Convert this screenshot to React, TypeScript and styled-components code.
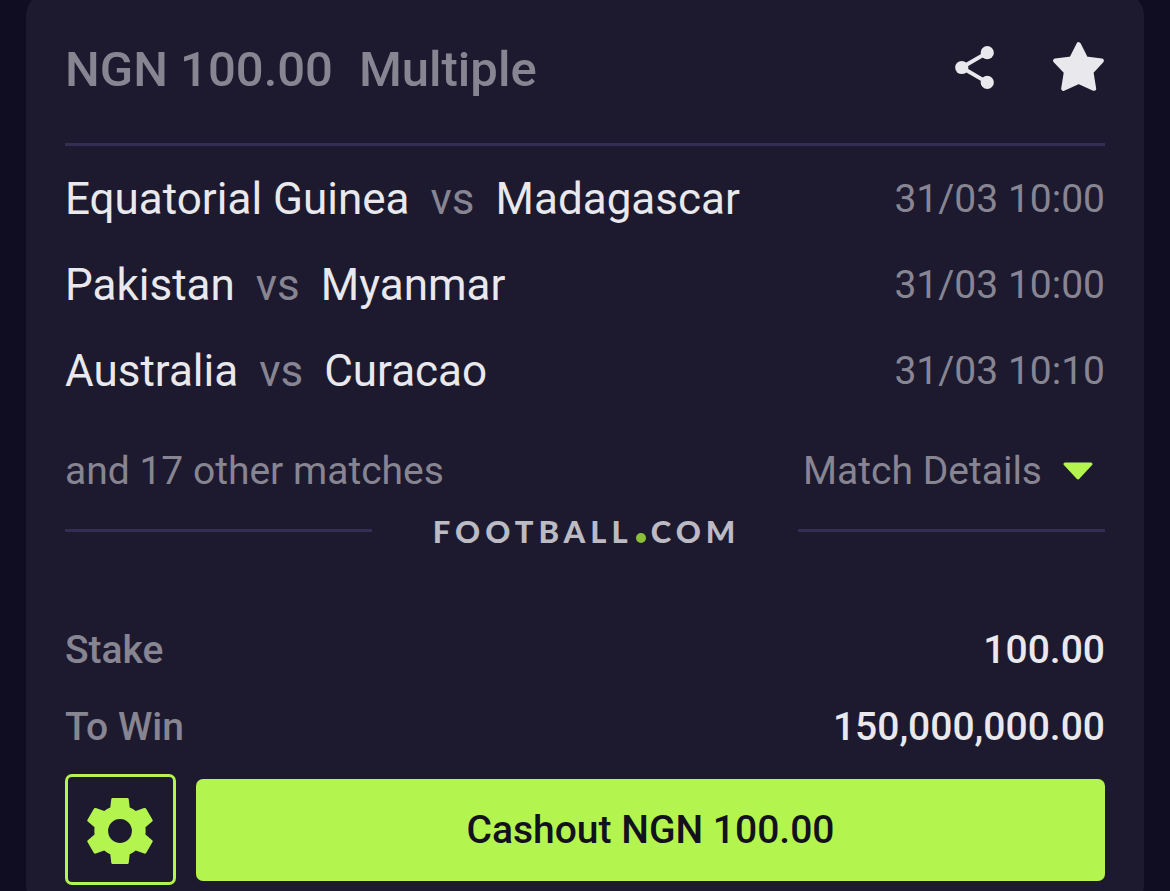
import React, { useState } from "react";
import styled, { createGlobalStyle } from "styled-components";

const color = {
  page: "#100d23",
  card: "#1d1a2f",
  line: "#332e54",
  muted: "#888593",
  text: "#e9e8ec",
  lime: "#b3f54e",
  ink: "#14111f",
};

const GlobalStyle = createGlobalStyle`
  * { box-sizing: border-box; }
  body {
    margin: 0;
    background: ${color.page};
    color: ${color.text};
    font-family: Roboto, "Liberation Sans", sans-serif;
  }
  button { font: inherit; color: inherit; cursor: pointer; }
`;

const Page = styled.main`
  height: 100vh;
  overflow: hidden;
  padding: 0 26px;
`;

const Card = styled.article`
  margin-top: -8px;
  padding: 48px 39px 24px;
  border-radius: 24px;
  background: ${color.card};
`;

const Header = styled.header`
  display: flex;
  justify-content: space-between;
  align-items: center;
  height: 60px;
`;

const Title = styled.h1`
  display: flex;
  gap: 26px;
  margin: 0;
  color: ${color.muted};
  font-size: 49px;
  line-height: 60px;
  font-weight: 500;
`;

const Actions = styled.div`
  display: flex;
  align-items: center;
  gap: 53px;
  padding: 0 1px 5px 0;
`;

const IconButton = styled.button`
  display: flex;
  padding: 0;
  border: 0;
  background: none;
`;

const Rule = styled.hr`
  flex: 1;
  margin: 0;
  border: 0;
  height: 3px;
  background: ${color.line};
`;

const HeaderRule = styled(Rule)`
  margin-top: 43px;
`;

const Matches = styled.ul`
  display: flex;
  flex-direction: column;
  gap: 32px;
  margin: 26px 0 0;
  padding: 0;
  list-style: none;
`;

const Match = styled.li`
  display: flex;
  justify-content: space-between;
  align-items: center;
  font-size: 44px;
  line-height: 54px;
`;

const Teams = styled.span`
  display: flex;
  gap: 21px;
`;

const Versus = styled.span`
  color: ${color.muted};
`;

const Kickoff = styled.time`
  color: ${color.muted};
  font-size: 39px;
`;

const More = styled.div`
  display: flex;
  justify-content: space-between;
  margin-top: 49px;
  color: ${color.muted};
  font-size: 39px;
  line-height: 48px;
`;

const DetailsButton = styled.button`
  display: flex;
  align-items: center;
  gap: 21px;
  padding: 0 12px 0 0;
  border: 0;
  background: none;
`;

const BrandRow = styled.div`
  display: flex;
  align-items: center;
  gap: 58px;
  height: 30px;
  margin-top: 20px;
`;

const Brand = styled.span`
  display: flex;
  align-items: baseline;
  gap: 3px;
  padding: 2px 0 0 3px;
  color: #bcbac3;
  font-family: Lato, sans-serif;
  font-size: 31px;
  line-height: 30px;
  font-weight: 900;
  letter-spacing: 5px;
`;

const BrandDot = styled.i`
  width: 10px;
  height: 10px;
  margin-right: 2px;
  border-radius: 50%;
  background: #8abf3a;
`;

const Summary = styled.dl`
  display: flex;
  flex-direction: column;
  gap: 29px;
  margin: 81px 0 0;
  font-size: 39px;
  line-height: 48px;
  font-weight: 500;
`;

const SummaryRow = styled.div`
  display: flex;
  justify-content: space-between;
`;

const SummaryLabel = styled.dt`
  color: ${color.muted};
`;

const SummaryValue = styled.dd`
  margin: 0;
`;

const Footer = styled.footer`
  display: flex;
  align-items: center;
  gap: 20px;
  margin-top: 23px;
`;

const SettingsButton = styled.button`
  display: flex;
  align-items: center;
  justify-content: center;
  width: 111px;
  height: 111px;
  padding: 2px 2px 0 0;
  border: 3px solid ${color.lime};
  border-radius: 7px;
  background: none;
`;

const CashoutButton = styled.button`
  flex: 1;
  height: 102px;
  border: 0;
  border-radius: 7px;
  background: ${color.lime};
  && {
    color: ${color.ink};
    font-size: 39px;
    font-weight: 500;
  }
`;

const ShareIcon = () => (
  <svg width="51" height="51" viewBox="0 0 24 24" fill={color.text} aria-hidden="true">
    <path d="M18 5 6 12l12 7" fill="none" stroke={color.text} strokeWidth="1.9" />
    <circle cx="18" cy="5" r="3.1" />
    <circle cx="6" cy="12" r="3.1" />
    <circle cx="18" cy="19" r="3.1" />
  </svg>
);

const StarIcon = () => (
  <svg width="51" height="51" viewBox="0 0 153 153" aria-hidden="true">
    <path
      d="M77 7 99 50 146 56 115 90 123 140 77 119 31 140 39 90 7 56 55 50Z"
      fill={color.text}
      stroke={color.text}
      strokeWidth="13"
      strokeLinejoin="round"
    />
  </svg>
);

const CaretIcon = () => (
  <svg width="30" height="18" viewBox="0 0 30 18" aria-hidden="true">
    <path
      d="M2 2h26L15 16Z"
      fill={color.lime}
      stroke={color.lime}
      strokeWidth="3"
      strokeLinejoin="round"
    />
  </svg>
);

const GearIcon = () => (
  <svg width="66" height="66" viewBox="0 0 196 197" aria-hidden="true">
    <path
      fillRule="evenodd"
      fill={color.lime}
      d="M76 0h44q3 0 4 3l3 25q10 4 18 11l25-9q4-1 6 2l19 33q2 3-1 5l-20 17q1 11 0 22l20 17q3 2 1 5l-19 33q-2 3-6 2l-25-9q-8 7-18 11l-3 26q-1 3-4 3H76q-3 0-4-3l-3-26q-10-4-18-11l-25 9q-4 1-6-2L1 131q-2-3 1-5l20-17q-1-11 0-22L2 70q-3-2-1-5l19-33q2-3 6-2l25 9q8-7 18-11l3-25q1-3 4-3ZM98 63a35.500 35.500 0 1 0 0 71a35.500 35.500 0 1 0 0-71Z"
    />
  </svg>
);

const matches = [
  { home: "Equatorial Guinea", away: "Madagascar", time: "31/03 10:00" },
  { home: "Pakistan", away: "Myanmar", time: "31/03 10:00" },
  { home: "Australia", away: "Curacao", time: "31/03 10:10" },
];

export default function App() {
  const [favourite, setFavourite] = useState(true);
  return (
    <>
      <GlobalStyle />
      <Page>
        <Card>
          <Header>
            <Title>
              <span>NGN 100.00</span>
              <span>Multiple</span>
            </Title>
            <Actions>
              <IconButton type="button" aria-label="Share bet">
                <ShareIcon />
              </IconButton>
              <IconButton
                type="button"
                aria-label="Favourite"
                aria-pressed={favourite}
                onClick={() => setFavourite(!favourite)}
              >
                <StarIcon />
              </IconButton>
            </Actions>
          </Header>
          <HeaderRule />
          <Matches>
            {matches.map((m) => (
              <Match key={m.home}>
                <Teams>
                  <span>{m.home}</span>
                  <Versus>vs</Versus>
                  <span>{m.away}</span>
                </Teams>
                <Kickoff>{m.time}</Kickoff>
              </Match>
            ))}
          </Matches>
          <More>
            <span>and 17 other matches</span>
            <DetailsButton type="button">
              Match Details
              <CaretIcon />
            </DetailsButton>
          </More>
          <BrandRow>
            <Rule />
            <Brand>
              <span>FOOTBALL</span>
              <BrandDot />
              <span>COM</span>
            </Brand>
            <Rule />
          </BrandRow>
          <Summary>
            <SummaryRow>
              <SummaryLabel>Stake</SummaryLabel>
              <SummaryValue>100.00</SummaryValue>
            </SummaryRow>
            <SummaryRow>
              <SummaryLabel>To Win</SummaryLabel>
              <SummaryValue>150,000,000.00</SummaryValue>
            </SummaryRow>
          </Summary>
          <Footer>
            <SettingsButton type="button" aria-label="Cashout settings">
              <GearIcon />
            </SettingsButton>
            <CashoutButton type="button">Cashout NGN 100.00</CashoutButton>
          </Footer>
        </Card>
      </Page>
    </>
  );
}
